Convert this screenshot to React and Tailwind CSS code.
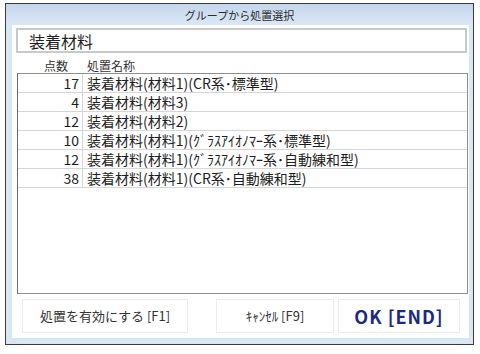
const rows = [
  { pts: 17, name: '装着材料(材料1)(CR系･標準型)' },
  { pts: 4, name: '装着材料(材料3)' },
  { pts: 12, name: '装着材料(材料2)' },
  { pts: 10, name: '装着材料(材料1)(ｸﾞﾗｽｱｲｵﾉﾏｰ系･標準型)' },
  { pts: 12, name: '装着材料(材料1)(ｸﾞﾗｽｱｲｵﾉﾏｰ系･自動練和型)' },
  { pts: 38, name: '装着材料(材料1)(CR系･自動練和型)' },
]

export default function App() {
  return (
    <div
      className="w-[480px] h-[354px] bg-white pt-[3px] pl-[5px] text-[#1e1e1e]"
      style={{ fontFamily: '"Noto Sans CJK JP", "Noto Sans", sans-serif' }}
    >
      {/* window */}
      <div className="w-[469px] h-[342px] border border-[#3c3c3c] bg-[#d9e6f4] flex flex-col">
        {/* title bar */}
        <div className="h-[21px] shrink-0 bg-gradient-to-b from-[#c3d6ed] to-[#dbe7f5] flex items-center justify-center pt-[2px] text-[11px] text-[#2a2a2a]">
          グループから処置選択
        </div>

        {/* content */}
        <div className="flex-1 ml-[6px] mr-[4px] mb-[6px] bg-white flex flex-col">
          <div className="mt-[3px] ml-[4px] mr-[2px] h-[25px] border-2 border-[#c9c9c9] flex items-center pl-[11px] text-[16px] leading-none">
            装着材料
          </div>

          {/* header */}
          <div className="flex h-[20px] items-end pb-[1px] text-[12px] leading-none text-[#333]">
            <div className="w-[56px] text-right">点数</div>
            <div className="pl-[19px]">処置名称</div>
          </div>

          {/* list */}
          <div className="ml-[5px] mr-[1px] h-[221px] border border-[#8e8e8e] border-l-[#6a6a6a] bg-white">
            {rows.map((r, i) => (
              <div key={i} className="flex h-[19px] border-b border-[#d6d6d6] text-[14px] leading-none">
                <div className="w-[65px] shrink-0 border-r border-[#d6d6d6] flex items-center justify-end pr-[3px]">
                  {r.pts}
                </div>
                <div className="flex items-center pl-[4px] whitespace-nowrap">{r.name}</div>
              </div>
            ))}
          </div>

          {/* buttons */}
          <div className="flex mt-[5px] h-[34px]">
            <button className="ml-[10px] w-[166px] h-full border border-[#ececec] bg-white text-[13px] text-[#333]">
              処置を有効にする [F1]
            </button>
            <button className="ml-[28px] w-[118px] h-full border border-[#ececec] bg-white text-[13px] text-[#333]">
              ｷｬﾝｾﾙ [F9]
            </button>
            <button className="ml-[4px] w-[122px] h-full border border-[#ececec] bg-white text-[18px] font-bold tracking-[1px] text-[#1b2a7f]">
              OK [END]
            </button>
          </div>
        </div>
      </div>
    </div>
  )
}
